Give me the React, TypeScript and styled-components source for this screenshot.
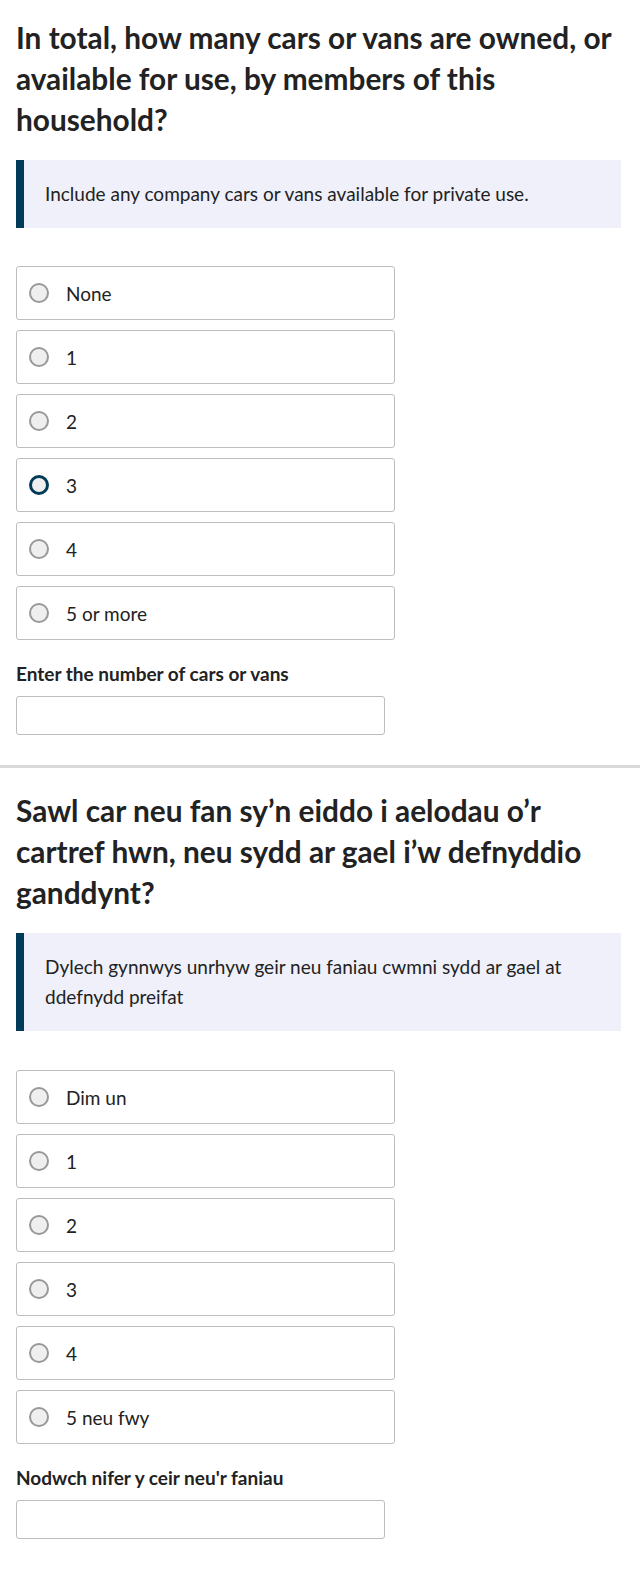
import React from "react";
import styled, { createGlobalStyle } from "styled-components";

const GlobalStyle = createGlobalStyle`
  html, body { margin: 0; padding: 0; background: #ffffff; }
  body {
    font-family: Lato, "Open Sans", "Liberation Sans", sans-serif;
    color: #222222;
    -webkit-font-smoothing: antialiased;
  }
  * { box-sizing: border-box; }
`;

const Page = styled.div`
  display: flex;
  flex-direction: column;
  width: 640px;
`;

const Section = styled.section<{ $top: number }>`
  display: flex;
  flex-direction: column;
  padding: ${(p) => p.$top}px 19px 30px 16px;
`;

const Divider = styled.hr`
  margin: 0;
  border: none;
  height: 3px;
  background: #d9d9d9;
  width: 100%;
`;

const Heading = styled.h1`
  margin: 0;
  font-size: 29.8px;
  line-height: 41px;
  font-weight: 700;
  color: #222222;
`;

const Panel = styled.div`
  margin-top: 20px;
  background: #eff0f9;
  border-left: 8px solid #003c57;
  padding: 19px 30px 19px 21px;
  font-size: 19px;
  line-height: 30px;
  color: #222222;
`;

const Options = styled.div<{ $gap: number }>`
  margin-top: ${(p) => p.$gap}px;
  display: flex;
  flex-direction: column;
  gap: 10px;
  width: 379px;
`;

const OptionBox = styled.label`
  display: flex;
  align-items: center;
  height: 54px;
  border: 1px solid #bdbdbd;
  border-radius: 3px;
  padding-left: 12px;
  background: #ffffff;
  font-size: 19px;
  color: #222222;
`;

const Radio = styled.span<{ $focused?: boolean }>`
  display: inline-block;
  width: 20px;
  height: 20px;
  border-radius: 50%;
  background: #efefef;
  border: ${(p) => (p.$focused ? "3px solid #003c57" : "2px solid #999999")};
  margin-right: 17px;
  flex-shrink: 0;
`;

const FieldLabel = styled.div`
  margin-top: 22px;
  font-size: 19px;
  line-height: 24px;
  font-weight: 700;
  color: #222222;
`;

const TextInput = styled.div`
  margin-top: 10px;
  width: 369px;
  height: 39px;
  border: 1px solid #bdbdbd;
  border-radius: 3px;
  background: #ffffff;
`;

type Q = {
  title: string;
  guidance: string;
  options: string[];
  label: string;
  focused?: number;
  top: number;
  optionsGap: number;
};

const questions: Q[] = [
  {
    title:
      "In total, how many cars or vans are owned, or available for use, by members of this household?",
    guidance: "Include any company cars or vans available for private use.",
    options: ["None", "1", "2", "3", "4", "5 or more"],
    label: "Enter the number of cars or vans",
    focused: 3,
    top: 17,
    optionsGap: 38,
  },
  {
    title:
      "Sawl car neu fan sy\u2019n eiddo i aelodau o\u2019r cartref hwn, neu sydd ar gael i\u2019w defnyddio ganddynt?",
    guidance:
      "Dylech gynnwys unrhyw geir neu faniau cwmni sydd ar gael at ddefnydd preifat",
    options: ["Dim un", "1", "2", "3", "4", "5 neu fwy"],
    label: "Nodwch nifer y ceir neu'r faniau",
    top: 22,
    optionsGap: 39,
  },
];

function Question({ q }: { q: Q }) {
  return (
    <Section $top={q.top}>
      <Heading>{q.title}</Heading>
      <Panel>{q.guidance}</Panel>
      <Options $gap={q.optionsGap}>
        {q.options.map((o, i) => (
          <OptionBox key={o}>
            <Radio $focused={q.focused === i} />
            {o}
          </OptionBox>
        ))}
      </Options>
      <FieldLabel>{q.label}</FieldLabel>
      <TextInput />
    </Section>
  );
}

export default function App() {
  return (
    <>
      <GlobalStyle />
      <Page>
        <Question q={questions[0]} />
        <Divider />
        <Question q={questions[1]} />
      </Page>
    </>
  );
}
